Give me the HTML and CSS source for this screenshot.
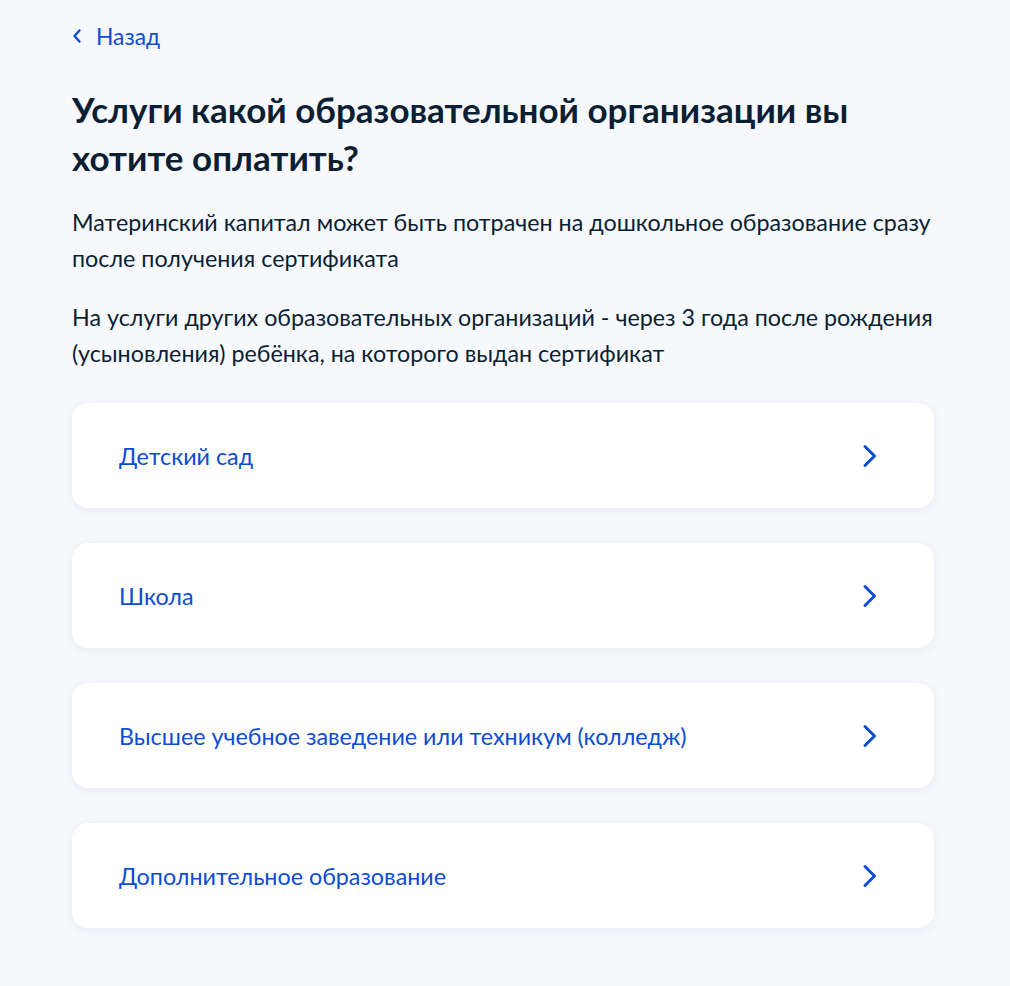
FILE: index.html
```html
<!DOCTYPE html>
<html lang="ru">
<head>
<meta charset="utf-8">
<link rel="stylesheet" href="styles.css">
</head>
<body>
<main class="page">
  <a class="back" href="#">
    <svg class="back-icon" width="10" height="16" viewBox="0 0 10 16"><path d="M7.5 2.5 L2.5 8 L7.5 13.5" fill="none" stroke="#0d4cd3" stroke-width="2.4" stroke-linecap="round" stroke-linejoin="round"/></svg>
    <span>Назад</span>
  </a>
  <h1 class="title">Услуги какой образовательной организации вы хотите оплатить?</h1>
  <p class="text">Материнский капитал может быть потрачен на дошкольное образование сразу после получения сертификата</p>
  <p class="text">На услуги других образовательных организаций - через 3 года после рождения (усыновления) ребёнка, на которого выдан сертификат</p>
  <div class="list">
    <a class="card" href="#"><span>Детский сад</span><svg class="chev" width="16" height="26" viewBox="0 0 16 26"><path d="M3 3.5 L12.5 13 L3 22.5" fill="none" stroke="#0d4cd3" stroke-width="3" stroke-linecap="round" stroke-linejoin="round"/></svg></a>
    <a class="card" href="#"><span>Школа</span><svg class="chev" width="16" height="26" viewBox="0 0 16 26"><path d="M3 3.5 L12.5 13 L3 22.5" fill="none" stroke="#0d4cd3" stroke-width="3" stroke-linecap="round" stroke-linejoin="round"/></svg></a>
    <a class="card" href="#"><span>Высшее учебное заведение или техникум (колледж)</span><svg class="chev" width="16" height="26" viewBox="0 0 16 26"><path d="M3 3.5 L12.5 13 L3 22.5" fill="none" stroke="#0d4cd3" stroke-width="3" stroke-linecap="round" stroke-linejoin="round"/></svg></a>
    <a class="card" href="#"><span>Дополнительное образование</span><svg class="chev" width="16" height="26" viewBox="0 0 16 26"><path d="M3 3.5 L12.5 13 L3 22.5" fill="none" stroke="#0d4cd3" stroke-width="3" stroke-linecap="round" stroke-linejoin="round"/></svg></a>
  </div>
</main>
</body>
</html>
```
FILE: styles.css
```css
html, body {
  margin: 0;
  padding: 0;
  background: #f7f8fc;
}
body {
  font-family: Lato, "Noto Sans", sans-serif;
  color: #0b1f33;
}
.page {
  padding: 20px 76px 40px 72px;
}
.back {
  display: inline-flex;
  align-items: center;
  gap: 14px;
  color: #0d4cd3;
  text-decoration: none;
  font-size: 22.8px;
  line-height: 32px;
}
.back-icon {
  display: block;
}
.title {
  margin: 33px 0 0;
  font-size: 35px;
  line-height: 48px;
  font-weight: 700;
}
.text {
  margin: 23px -16px 0 0;
  font-size: 23.3px;
  line-height: 36px;
}
.list {
  margin-top: 32px;
  display: flex;
  flex-direction: column;
  gap: 35px;
}
.card {
  display: flex;
  align-items: center;
  justify-content: space-between;
  height: 105px;
  padding: 0 56px 0 47px;
  background: #fff;
  border-radius: 16px;
  box-shadow: 0 2px 10px rgba(28, 58, 130, 0.07);
  color: #0d4cd3;
  text-decoration: none;
  font-size: 23.3px;
}
.chev {
  display: block;
}
```
